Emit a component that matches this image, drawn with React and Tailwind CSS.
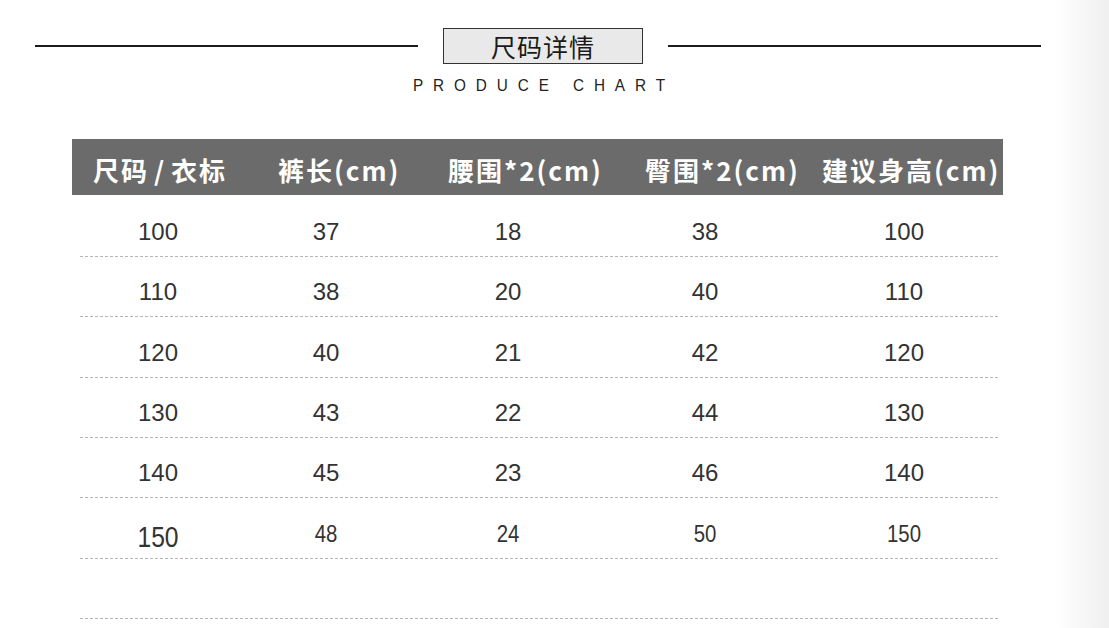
import React from 'react';

const headers = [
  { label: ['尺码', '/', '衣标'], w: 'w-[185px]' },
  { label: ['裤长(cm)'], w: 'w-[170px]' },
  { label: ['腰围*2(cm)'], w: 'w-[197px]' },
  { label: ['臀围*2(cm)'], w: 'w-[177px]' },
  { label: ['建议身高(cm)'], w: 'w-[181px]' },
];

const colWidths = ['w-[156px]', 'w-[180px]', 'w-[184px]', 'w-[210px]', 'w-[188px]'];

const rows = [
  { h: 'h-[62px]', cells: ['100', '37', '18', '38', '100'] },
  { h: 'h-[60px]', cells: ['110', '38', '20', '40', '110'] },
  { h: 'h-[61px]', cells: ['120', '40', '21', '42', '120'] },
  { h: 'h-[60px]', cells: ['130', '43', '22', '44', '130'] },
  { h: 'h-[60px]', cells: ['140', '45', '23', '46', '140'] },
  { h: 'h-[61px]', cells: ['150', '48', '24', '50', '150'], last: true },
  { h: 'h-[60px]', cells: ['', '', '', '', ''] },
];

export default function App() {
  return (
    <div className="w-[1109px] h-[628px] overflow-hidden bg-[linear-gradient(to_right,#ffffff_1055px,#efefef_1109px)] font-['Liberation_Sans','Noto_Sans_CJK_SC',sans-serif]">
      {/* Title */}
      <div className="pt-[28px] flex items-center">
        <div className="ml-[35px] w-[383px] h-[2px] bg-[#1c1c1c]" />
        <div className="ml-[25px] w-[200px] h-[36px] border border-[#333] bg-[#e9e9e9] flex items-center justify-center">
          <span className="text-[25px] leading-none text-[#1a1a1a] font-['Noto_Sans_CJK_SC',sans-serif] tracking-[1px]">尺码详情</span>
        </div>
        <div className="ml-[25px] w-[373px] h-[2px] bg-[#1c1c1c]" />
      </div>
      <div className="mt-[12px] ml-[413px] text-[17px] leading-[20px] tracking-[11px] text-[#222] scale-x-90 origin-left whitespace-nowrap">
        PRODUCE CHART
      </div>

      {/* Header bar */}
      <div className="mt-[43px] ml-[72px] w-[931px] h-[56px] bg-[#6b6b6b] flex items-center pl-[21px] pt-[5px]">
        {headers.map((h, i) => (
          <div
            key={i}
            className={`${h.w} shrink-0 text-white text-[26px] font-bold tracking-[2px] whitespace-nowrap font-['Noto_Sans_CJK_SC',sans-serif] leading-none`}
          >
            {h.label.length === 3 ? (
              <>
                {h.label[0]}
                <span className="mx-[5px]">{h.label[1]}</span>
                {h.label[2]}
              </>
            ) : (
              h.label[0]
            )}
          </div>
        ))}
      </div>

      {/* Rows */}
      <div className="ml-[80px] w-[918px]">
        {rows.map((r, i) => (
          <div key={i} className={`${r.h} flex items-end border-b border-dashed border-[#b5b5b5] pb-[11px]`}>
            {r.cells.map((c, j) => (
              <div
                key={j}
                className={`${colWidths[j]} shrink-0 text-center text-[#333] leading-[26px] ${
                  r.last && j === 0 ? 'text-[29px] scale-x-[0.85] translate-y-[3px]' : r.last ? 'text-[24px] scale-x-[0.85]' : 'text-[24px]'
                }`}
              >
                {c}
              </div>
            ))}
          </div>
        ))}
      </div>
    </div>
  );
}
